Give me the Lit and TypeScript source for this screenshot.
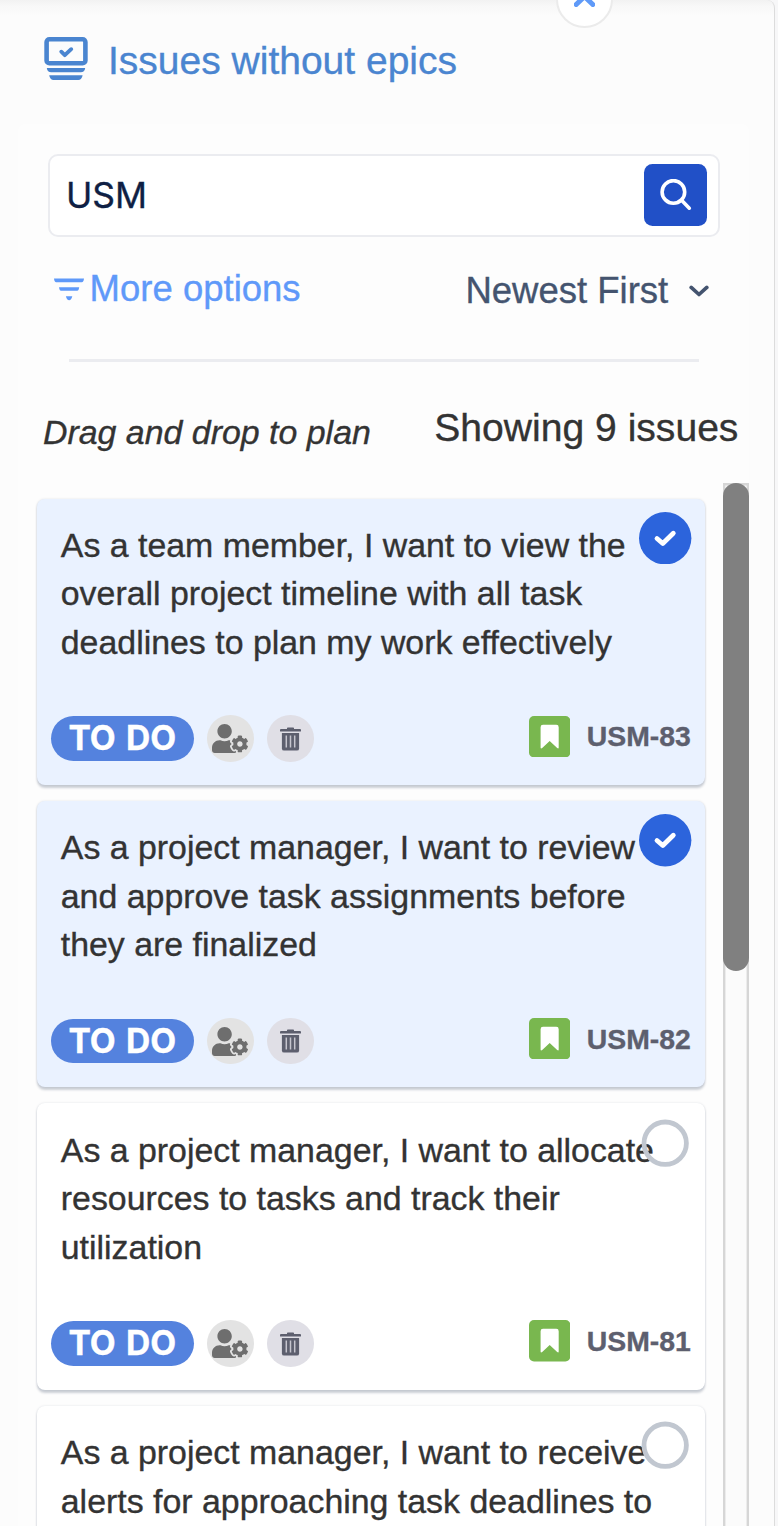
import { LitElement, css, html, svg } from 'lit';
import { customElement, property, state } from 'lit/decorators.js';

interface Issue {
  key: string;
  summary: string;
  selected: boolean;
}

const chevronUp = svg`<path d="M2.2 10.5l8.3-8 8.3 8" fill="none" stroke="currentColor" stroke-width="5" stroke-linecap="round" />`;

const userCog = svg`
  <path d="M610.5 373.3c2.6-14.1 2.6-28.5 0-42.6l25.8-14.9c3-1.7 4.3-5.2 3.3-8.5-6.7-21.6-18.2-41.2-33.2-57.4-2.3-2.5-6-3.1-9-1.4l-25.8 14.9c-10.9-9.3-23.4-16.5-36.9-21.3v-29.8c0-3.4-2.4-6.4-5.7-7.1-22.3-5-45-4.8-66.2 0-3.3.7-5.7 3.7-5.7 7.1v29.8c-13.5 4.8-26 12-36.9 21.3l-25.8-14.9c-2.9-1.7-6.7-1.1-9 1.4-15 16.2-26.5 35.8-33.2 57.4-1 3.3.4 6.8 3.3 8.5l25.8 14.9c-2.6 14.1-2.6 28.5 0 42.6l-25.8 14.9c-3 1.7-4.3 5.2-3.3 8.5 6.7 21.6 18.2 41.1 33.2 57.4 2.3 2.5 6 3.1 9 1.4l25.8-14.9c10.9 9.3 23.4 16.5 36.9 21.3v29.8c0 3.4 2.4 6.4 5.7 7.1 22.3 5 45 4.8 66.2 0 3.3-.7 5.7-3.7 5.7-7.1v-29.8c13.5-4.8 26-12 36.9-21.3l25.8 14.9c2.9 1.7 6.7 1.1 9-1.4 15-16.2 26.5-35.8 33.2-57.4 1-3.3-.4-6.8-3.3-8.5l-25.8-14.9zM496 400.5c-26.8 0-48.5-21.8-48.5-48.5s21.8-48.5 48.5-48.5 48.5 21.8 48.5 48.5-21.7 48.5-48.5 48.5zM224 256c70.7 0 128-57.3 128-128S294.7 0 224 0 96 57.3 96 128s57.3 128 128 128zm201.2 226.5c-2.3-1.2-4.6-2.6-6.8-3.9l-7.9 4.6c-6 3.4-12.8 5.3-19.6 5.3-10.9 0-21.4-4.6-28.9-12.6-18.3-19.8-32.3-43.9-40.2-69.6-5.5-17.7 1.9-36.4 17.9-45.7l7.9-4.6c-.1-2.6-.1-5.2 0-7.8l-7.9-4.6c-16-9.2-23.4-28-17.9-45.7.9-2.9 2.2-5.8 3.2-8.7-3.8-.3-7.5-1.2-11.4-1.2h-16.7c-22.2 10.2-46.9 16-72.9 16s-50.6-5.8-72.9-16h-16.7C60.2 288 0 348.2 0 422.4V464c0 26.5 21.5 48 48 48h352c10.1 0 19.5-3.2 27.2-8.5-1.2-3.8-2-7.7-2-11.8v-9.2z" fill="currentColor" />
`;

/** Issue card with status, actions and a selection toggle. */
@customElement('issue-card')
export class IssueCard extends LitElement {
  @property({ type: String })
  key = '';

  @property({ type: String })
  summary = '';

  @property({ type: Boolean, reflect: true })
  selected = false;

  static override styles = css`
    :host {
      display: flex;
      flex-direction: column;
      justify-content: space-between;
      position: relative;
      flex: none;
      box-sizing: border-box;
      height: 286.4px;
      padding: 22.4px 14px 23px 13.4px;
      border-radius: 8px;
      background: #ffffff;
      box-shadow: 0 2.4px 2.4px rgba(9, 30, 66, 0.2), 0 0 2.4px rgba(9, 30, 66, 0.12);
    }

    :host([selected]) {
      background: #eaf2ff;
    }

    .summary {
      margin: 0 20px 0 10px;
      font-size: 33.88px;
      line-height: 48.4px;
      color: #333333;
    }

    .footer {
      display: flex;
      align-items: center;
      height: 46.5px;
    }

    .status {
      box-sizing: border-box;
      width: 143px;
      height: 44.6px;
      border-radius: 23px;
      background: #5482de;
      color: #ffffff;
      font: 700 33.6px/44.6px Inter, 'Liberation Sans', sans-serif;
      word-spacing: 2.4px;
      text-align: center;
      white-space: nowrap;
    }

    .action {
      display: flex;
      align-items: center;
      justify-content: center;
      width: 46.6px;
      height: 46.6px;
      margin-left: 13.3px;
      border-radius: 50%;
      background: #e3e3e3;
      color: #6e6e6e;
    }

    .action.remove {
      background: #e0dfe6;
      color: #5d5f6e;
    }

    .story {
      margin: 0 16.6px 5px auto;
      width: 41.4px;
      height: 41.4px;
    }

    .key {
      margin-bottom: 5px;
      font-size: 28.4px;
      font-weight: 700;
      line-height: 34px;
      color: #5d5f6e;
    }

    .toggle {
      position: absolute;
      top: 13.2px;
      right: 13.2px;
      width: 52.4px;
      height: 52.4px;
    }

    svg {
      display: block;
    }
  `;

  override render() {
    return html`
      <div class="summary">${this.summary}</div>
      <div class="footer">
        <span class="status">TO DO</span>
        <span class="action">
          <svg width="36" height="29" viewBox="0 0 640 512">${userCog}</svg>
        </span>
        <span class="action remove">
          <svg width="21" height="24" viewBox="0 0 21 24">
            <path d="M7 2v-.8Q7 .4 7.800.4h5.400q.8 0 .8.8V2h6q1 0 1 1v1q0 .6-.7.6H.7Q0 4.600 0 4V3q0-1 1-1z" fill="currentColor" />
            <path d="M1.900 6h17.200v15.400q0 2.200-2.200 2.200H4.100q-2.200 0-2.200-2.200z" fill="currentColor" />
            <path d="M6.300 8.600v12M10.500 8.600v12M14.700 8.600v12" stroke="#c6c5ce" stroke-width="1.500" />
          </svg>
        </span>
        <svg class="story" viewBox="0 0 41.4 41.4">
          <rect width="41.4" height="41.4" rx="5" fill="#79b74f" />
          <path d="M11.6 11.2q0-2.4 2.4-2.4h13.3q2.4 0 2.4 2.4v20.2q0 1.7-1.5.7l-7.5-7.2-7.5 7.2q-1.6 1-1.6-.7z" fill="#ffffff" />
        </svg>
        <span class="key">${this.key}</span>
      </div>
      <svg class="toggle" viewBox="0 0 52.4 52.4">
        ${this.selected
          ? svg`
              <circle cx="26.2" cy="26.2" r="26.2" fill="#2c64dc" />
              <path d="M18 26.5l5.8 5 10.5-10.3" fill="none" stroke="#ffffff" stroke-width="4.8" stroke-linecap="round" stroke-linejoin="round" />
            `
          : svg`<circle cx="26.2" cy="26.2" r="21.2" fill="none" stroke="#c1c7d0" stroke-width="4.8" />`}
      </svg>
    `;
  }
}

/** Side panel that lists the issues which have no epic yet. */
@customElement('app-root')
export class AppRoot extends LitElement {
  @state()
  private query = 'USM';

  @state()
  private total = 9;

  @state()
  private issues: Issue[] = [
    {
      key: 'USM-83',
      summary:
        'As a team member, I want to view the overall project timeline with all task deadlines to plan my work effectively',
      selected: true,
    },
    {
      key: 'USM-82',
      summary: 'As a project manager, I want to review and approve task assignments before they are finalized',
      selected: true,
    },
    {
      key: 'USM-81',
      summary: 'As a project manager, I want to allocate resources to tasks and track their utilization',
      selected: false,
    },
    {
      key: 'USM-80',
      summary: 'As a project manager, I want to receive alerts for approaching task deadlines to',
      selected: false,
    },
  ];

  static override styles = css`
    :host {
      display: block;
      height: 1526px;
      overflow: hidden;
      background: #f7f7f8;
      font-family: 'Liberation Sans', Arial, sans-serif;
      -webkit-text-stroke: 0.35px currentColor;
    }

    .panel {
      position: relative;
      display: flex;
      flex-direction: column;
      box-sizing: border-box;
      width: 775px;
      height: 1526px;
      border-right: 1.2px solid #dcdcdc;
      border-top-right-radius: 8px;
      background: linear-gradient(#f2f2f2, #f8f8f8 6px, #fcfcfc 16px);
    }

    .collapse {
      position: absolute;
      top: -29px;
      left: 556.4px;
      box-sizing: border-box;
      width: 57px;
      height: 57px;
      padding: 20.6px 0 0 15.7px;
      border: 2.4px solid #ebebeb;
      border-radius: 50%;
      background: #ffffff;
      color: #5f9af8;
    }

    .header {
      display: flex;
      align-items: center;
      gap: 20px;
      height: 84px;
      padding: 17px 0 23px 44px;
      color: #4a85d0;
    }

    .title {
      font-size: 39px;
      line-height: 46px;
      margin: 3px 0 0;
      font-weight: 400;
    }

    .body {
      display: flex;
      flex-direction: column;
      flex: 1;
      min-height: 0;
      margin: 0 25px 0 18px;
      border-radius: 8px 8px 0 0;
      background: #fdfdfd;
    }

    .search {
      display: flex;
      align-items: center;
      justify-content: space-between;
      box-sizing: border-box;
      height: 83px;
      margin: 29.6px 29px 0 30px;
      padding: 0 10.8px 0 16px;
      border: 2.6px solid #ebecf0;
      border-radius: 10px;
      background: #ffffff;
      font: 400 35.4px/44px Inter, 'Liberation Sans', sans-serif;
      color: #0f1f44;
    }

    .query {
      padding-top: 1.6px;
    }

    .search-button {
      display: flex;
      align-items: center;
      justify-content: center;
      width: 62.8px;
      height: 62.8px;
      border-radius: 8.5px;
      background: #2150c7;
      color: #ffffff;
    }

    .options {
      display: flex;
      align-items: center;
      justify-content: space-between;
      height: 46px;
      margin: 29px 39.8px 0 35.6px;
      font-size: 36.5px;
      line-height: 46px;
    }

    .more {
      display: flex;
      align-items: center;
      gap: 6px;
      color: #5f99f9;
    }

    .sort {
      display: flex;
      align-items: center;
      gap: 21px;
      margin-top: 4px;
      color: #44546f;
      font-size: 36.5px;
    }

    .divider {
      height: 2.6px;
      margin: 47.6px 50.4px 0 50.6px;
      background: #ebecf0;
    }

    .hint {
      display: flex;
      justify-content: space-between;
      align-items: baseline;
      height: 121px;
      box-sizing: border-box;
      padding: 43.2px 10.6px 0 25px;
      color: #333333;
    }

    .drag {
      padding-top: 2px;
      font-size: 33.9px;
      font-style: italic;
      position: relative;
      top: 3px;
    }

    .count {
      font-size: 39.1px;
      line-height: 46px;
    }

    .list {
      display: flex;
      justify-content: space-between;
      flex: 1;
      min-height: 0;
    }

    .cards {
      display: flex;
      flex-direction: column;
      gap: 16px;
      width: 667.5px;
      padding: 15.8px 0 0 19.4px;
    }

    .track {
      box-sizing: border-box;
      width: 26px;
      background: #fbfbfb;
      box-shadow: inset 2.4px 0 #d6d6d6, inset -2.4px 0 #d6d6d6, inset 0 2.4px #d6d6d6;
    }

    .thumb {
      height: 488.6px;
      border-radius: 13px;
      background: #808080;
    }

    svg {
      display: block;
    }
  `;

  override render() {
    return html`
      <div class="panel">
        <div class="header">
          <svg width="44" height="44" viewBox="0 0 44 44">
            <rect x="2.6" y="2.3" width="38.8" height="24" rx="2.8" fill="none" stroke="currentColor" stroke-width="4.6" />
            <path d="M17.3 14.7l3.5 3.5 6.4-6" fill="none" stroke="currentColor" stroke-width="3.9" stroke-linecap="round" stroke-linejoin="round" />
            <path d="M2.8 31h38.4q-.6 4.3-4.4 4.3H7.2q-3.8 0-4.4-4.3zM5.2 38.2h33.4q-.8 4.7-4.4 4.7H9.6q-3.6 0-4.4-4.7z" fill="currentColor" />
          </svg>
          <h1 class="title">Issues without epics</h1>
        </div>
        <div class="body">
          <div class="search">
            <span class="query">${this.query}</span>
            <span class="search-button">
              <svg width="32" height="32" viewBox="0 0 32 32" fill="none" stroke="currentColor" stroke-width="3.6" stroke-linecap="round">
                <circle cx="13.4" cy="12.9" r="11.3" />
                <path d="M21.6 21.3l7.7 7.9" />
              </svg>
            </span>
          </div>
          <div class="options">
            <div class="more">
              <svg width="30" height="24" viewBox="0 0 30 24" fill="currentColor">
                <path d="M0 1.5h30q-.4 3.8-2.2 3.8H2.2Q.4 5.3 0 1.5zM5 10.3h20.2q-.5 3.5-2 3.5H7q-1.5 0-2-3.5zM11.9 19.3h6.4q-1 3.9-3.2 3.9t-3.2-3.9z" />
              </svg>
              <span>More options</span>
            </div>
            <div class="sort">
              <span>Newest First</span>
              <svg width="20" height="12" viewBox="0 0 20 12">
                <path d="M2.2 2.4l7.8 7.1 7.8-7.1" fill="none" stroke="currentColor" stroke-width="3.7" stroke-linecap="round" stroke-linejoin="round" />
              </svg>
            </div>
          </div>
          <div class="divider"></div>
          <div class="hint">
            <span class="drag">Drag and drop to plan</span>
            <span class="count">Showing ${this.total} issues</span>
          </div>
          <div class="list">
            <div class="cards">
              ${this.issues.map(
                (issue) => html`
                  <issue-card .key=${issue.key} .summary=${issue.summary} ?selected=${issue.selected}></issue-card>
                `,
              )}
            </div>
            <div class="track"><div class="thumb"></div></div>
          </div>
        </div>
        <div class="collapse">
          <svg width="21" height="13" viewBox="0 0 21 13">${chevronUp}</svg>
        </div>
      </div>
    `;
  }
}

declare global {
  interface HTMLElementTagNameMap {
    'app-root': AppRoot;
    'issue-card': IssueCard;
  }
}
